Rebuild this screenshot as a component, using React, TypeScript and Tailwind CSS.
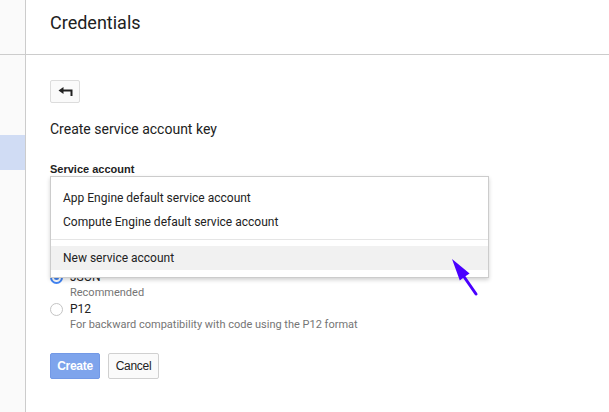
import React from 'react';

const roboto = { fontFamily: 'Roboto, "Liberation Sans", sans-serif' };

const BackArrow = () => (
  <svg width="15" height="11" viewBox="0 0 15 11" fill="none">
    <path d="M0.5 4.5 L5.5 1 L5.5 8 Z" fill="#222" />
    <path d="M5 4.5 H13.5 V10" stroke="#222" strokeWidth="2" />
  </svg>
);

const Radio = ({ checked }: { checked?: boolean }) =>
  checked ? (
    <span className="w-[13px] h-[13px] rounded-full border-2 border-[#4285f4] flex items-center justify-center">
      <span className="w-[5px] h-[5px] rounded-full bg-[#4285f4]" />
    </span>
  ) : (
    <span className="w-[13px] h-[13px] rounded-full border border-[#c4c4c4] bg-white" />
  );

const KeyOption = ({ label, hint, checked }: { label: string; hint: string; checked?: boolean }) => (
  <div>
    <div className="flex items-center gap-[7px] h-[16px]">
      <Radio checked={checked} />
      <span className="text-[12px] leading-[16px] text-[#222]">{label}</span>
    </div>
    <div className="pl-[20px] text-[11px] leading-[16px] text-[#757575]">{hint}</div>
  </div>
);

export default function App() {
  return (
    <div className="relative w-[609px] h-[412px] flex overflow-hidden bg-white" style={roboto}>
      {/* left nav strip */}
      <div className="w-[26px] shrink-0 flex flex-col border-r border-[#cccccc] bg-[#fafafa]">
        <div className="h-[55px] shrink-0 border-b border-[#cccccc]" />
        <div className="mt-[80px] h-[35px] bg-[#d0dcf4]" />
      </div>

      <div className="flex-1 flex flex-col">
        <div className="h-[55px] shrink-0 border-b border-[#cccccc] pl-[24px] pt-[12px]">
          <h1 className="text-[18px] leading-[22px] text-[#212121]">Credentials</h1>
        </div>

        <div className="pl-[24px] flex flex-col items-start">
          <button className="mt-[25px] w-[30px] h-[23px] flex items-center justify-center rounded-[2px] border border-[#dcdcdc] bg-[#fafafa]">
            <BackArrow />
          </button>

          <div className="mt-[16px] text-[14px] leading-[20px] text-[#212121]">Create service account key</div>

          <div
            className="mt-[24px] text-[11px] leading-[13px] font-bold text-[#222]"
            style={{ fontFamily: '"Liberation Sans", Arial, sans-serif' }}
          >
            Service account
          </div>

          <div className="relative w-[440px]">
            <div className="h-[30px] w-[300px]" />
            <div
              className="mt-[20px] h-[13px] pl-[4px] text-[11px] font-bold text-[#222]"
              style={{ fontFamily: '"Liberation Sans", Arial, sans-serif' }}
            >
              Key type
            </div>
            <div className="mt-[30px] flex flex-col">
              <KeyOption label="JSON" hint="Recommended" checked />
              <KeyOption label="P12" hint="For backward compatibility with code using the P12 format" />
            </div>

            {/* open dropdown */}
            <div className="absolute top-0 left-0 w-[439px] bg-white border border-[#cccccc] shadow-[0_2px_4px_rgba(0,0,0,0.18)] pt-[9px] pb-[7px] text-[12px] text-[#222]">
              <div className="h-[24px] flex items-center px-[12px]">App Engine default service account</div>
              <div className="h-[24px] flex items-center px-[12px]">Compute Engine default service account</div>
              <div className="mt-[5px] mb-[6px] h-px bg-[#e5e5e5]" />
              <div className="h-[24px] flex items-center px-[12px] bg-[#f1f1f1]">New service account</div>
            </div>
          </div>

          <div className="mt-[20px] flex gap-[8px]" style={{ fontFamily: '"Liberation Sans", Arial, sans-serif' }}>
            <button className="w-[50px] h-[26px] rounded-[2px] border border-[#7399e6] bg-[#7ea4ec] text-white text-[12px] font-bold tracking-[-0.3px]">
              Create
            </button>
            <button className="w-[51px] h-[26px] rounded-[2px] border border-[#d0d0d0] bg-[#fafafa] text-[#222] text-[12px] tracking-[-0.3px]">
              Cancel
            </button>
          </div>
        </div>
      </div>

      {/* pointer annotation */}
      <svg className="absolute left-[445px] top-[255px]" width="36" height="42" viewBox="0 0 36 42">
        <path d="M7 4 L24.6 18.4 L20 21.5 L14.8 25.6 Z" fill="#4a00ff" />
        <path d="M18.5 21 L31 39" stroke="#4a00ff" strokeWidth="3" strokeLinecap="round" />
      </svg>
    </div>
  );
}
